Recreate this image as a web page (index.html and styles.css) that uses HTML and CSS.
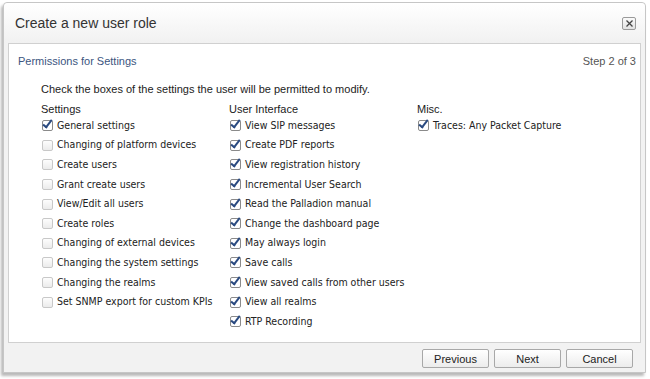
FILE: index.html
```html
<!DOCTYPE html>
<html>
<head>
<meta charset="utf-8">
<link rel="stylesheet" href="styles.css">
</head>
<body>
<div class="dialog">
  <div class="dlg-head">
    <span class="dlg-title">Create a new user role</span>
    <span class="close">
      <svg width="9" height="9" viewBox="0 0 9 9"><path d="M1.5 1.5 L7.5 7.5 M7.5 1.5 L1.5 7.5" stroke="#444" stroke-width="1.3" fill="none"/></svg>
    </span>
  </div>
  <div class="panel">
    <div class="panel-head">
      <span class="ptitle">Permissions for Settings</span>
      <span class="step">Step 2 of 3</span>
    </div>
    <div class="intro">Check the boxes of the settings the user will be permitted to modify.</div>
    <div class="cols">
      <div class="col">
        <div class="col-title">Settings</div>
        <div class="item"><span class="cb on"></span>General settings</div>
        <div class="item"><span class="cb"></span>Changing of platform devices</div>
        <div class="item"><span class="cb"></span>Create users</div>
        <div class="item"><span class="cb"></span>Grant create users</div>
        <div class="item"><span class="cb"></span>View/Edit all users</div>
        <div class="item"><span class="cb"></span>Create roles</div>
        <div class="item"><span class="cb"></span>Changing of external devices</div>
        <div class="item"><span class="cb"></span>Changing the system settings</div>
        <div class="item"><span class="cb"></span>Changing the realms</div>
        <div class="item"><span class="cb"></span>Set SNMP export for custom KPIs</div>
      </div>
      <div class="col">
        <div class="col-title">User Interface</div>
        <div class="item"><span class="cb on"></span>View SIP messages</div>
        <div class="item"><span class="cb on"></span>Create PDF reports</div>
        <div class="item"><span class="cb on"></span>View registration history</div>
        <div class="item"><span class="cb on"></span>Incremental User Search</div>
        <div class="item"><span class="cb on"></span>Read the Palladion manual</div>
        <div class="item"><span class="cb on"></span>Change the dashboard page</div>
        <div class="item"><span class="cb on"></span>May always login</div>
        <div class="item"><span class="cb on"></span>Save calls</div>
        <div class="item"><span class="cb on"></span>View saved calls from other users</div>
        <div class="item"><span class="cb on"></span>View all realms</div>
        <div class="item"><span class="cb on"></span>RTP Recording</div>
      </div>
      <div class="col">
        <div class="col-title">Misc.</div>
        <div class="item"><span class="cb on"></span>Traces: Any Packet Capture</div>
      </div>
    </div>
  </div>
  <div class="footer">
    <button class="btn">Previous</button>
    <button class="btn">Next</button>
    <button class="btn">Cancel</button>
  </div>
</div>
</body>
</html>
```

FILE: styles.css
```css
html, body {
  margin: 0;
  padding: 0;
  background: #ffffff;
  width: 650px;
  height: 379px;
  overflow: hidden;
}
body {
  font-family: "Liberation Sans", Arial, sans-serif;
  color: #222;
}
.dialog {
  margin: 2px 4px 0 3px;
  height: 371px;
  border: 1px solid #c6c6c6;
  border-radius: 4px 4px 0 0;
  background: #f2f2f2;
  box-shadow: -2px 3px 3px rgba(0,0,0,0.28);
  display: flex;
  flex-direction: column;
  box-sizing: border-box;
}
.dlg-head {
  height: 40px;
  flex: none;
  display: flex;
  align-items: center;
  justify-content: space-between;
  padding: 0 9px 0 11px;
  background: linear-gradient(#ffffff, #f1f1f1);
  border-radius: 4px 4px 0 0;
}
.dlg-title {
  font-size: 14px;
  color: #333;
}
.close {
  width: 12px;
  height: 11px;
  border: 1px solid #9a9a9a;
  border-radius: 2px;
  background: linear-gradient(#fafafa, #e2e2e2);
  display: flex;
  align-items: center;
  justify-content: center;
  margin-top: 1px;
}
.panel {
  height: 300px;
  flex: none;
  margin: 0 4px 0 4px;
  background: #fff;
  border: 1px solid #d0d0d0;
  box-sizing: border-box;
  padding: 0 4px 0 9px;
}
.panel-head {
  display: flex;
  justify-content: space-between;
  font-size: 11px;
  height: 33px;
  align-items: center;
}
.ptitle { color: #3b5580; }
.step { color: #555; }
.intro {
  font-size: 11px;
  color: #222;
  margin: 6px 0 0 23px;
}
.cols {
  display: grid;
  grid-template-columns: 188px 188px 1fr;
  margin: 8px 0 0 23px;
}
.col-title {
  font-size: 11px;
  color: #222;
  height: 12px;
  line-height: 12px;
}
.item {
  font-family: "DejaVu Sans Condensed", "DejaVu Sans", sans-serif;
  font-size: 10.5px;
  color: #222;
  height: 19.6px;
  display: flex;
  align-items: center;
}
.cb {
  width: 9px;
  height: 9px;
  border: 1px solid #c8c8c8;
  border-radius: 2px;
  background: linear-gradient(#fdfdfd, #ebebeb);
  margin: 2px 4px 0 1px;
  flex: none;
  position: relative;
}
.cb.on {
  border-color: #8a8a8a;
  background: #fff;
}
.cb.on::after {
  content: "";
  position: absolute;
  left: 2px;
  top: -3px;
  width: 3px;
  height: 8px;
  border-right: 2.5px solid #2a4a80;
  border-bottom: 2.5px solid #2a4a80;
  transform: rotate(38deg);
}
.footer {
  flex: 1;
  display: flex;
  justify-content: flex-end;
  align-items: center;
  gap: 5px;
  padding: 2px 12px 0 0;
}
.btn {
  font-family: "Liberation Sans", Arial, sans-serif;
  font-size: 11px;
  color: #222;
  width: 67px;
  height: 19px;
  padding: 0;
  border: 1px solid #a8a8a8;
  border-radius: 2px;
  background: linear-gradient(#ffffff, #ececec);
}
```
